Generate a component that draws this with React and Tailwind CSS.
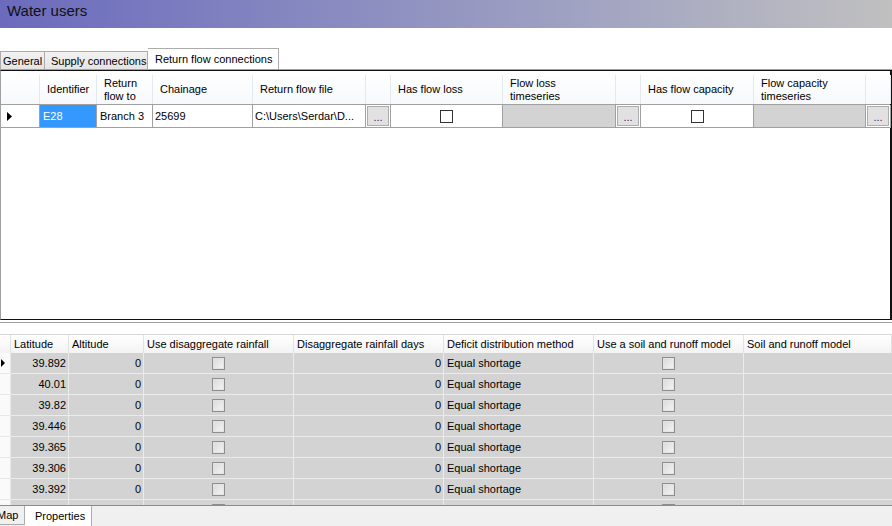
import React from 'react';

const upperCols = 'grid-cols-[39px_57px_56px_100px_113px_25px_112px_113px_25px_113px_112px_25px]';
const lowerCols = 'grid-cols-[11px_58px_75px_150px_150px_150px_150px_148px]';

const latitudes = ['39.892', '40.01', '39.82', '39.446', '39.365', '39.306', '39.392'];

function Check({ disabled }) {
  if (disabled) {
    return (
      <span className="block w-[13px] h-[13px] border border-[#8e8e8e] bg-[#e3e3e3] p-[1px]">
        <span className="block w-full h-full bg-gradient-to-br from-[#dcdcdc] to-[#f2f2f2]" />
      </span>
    );
  }
  return <span className="block w-[13px] h-[13px] border border-[#333333] bg-white" />;
}

function DotsButton() {
  return (
    <div className="h-full p-[1px] border-r border-b border-[#a0a0a0]">
      <div className="h-full border border-[#adadad] bg-[#e1e1e1] flex items-end justify-center pb-[2px] text-[#3a1d6e] leading-none">
        ...
      </div>
    </div>
  );
}

function Arrow() {
  return (
    <svg width="5" height="9" viewBox="0 0 5 9">
      <path d="M0 0 L5 4.5 L0 9 Z" fill="#000" />
    </svg>
  );
}

function HeaderCell({ children }) {
  return (
    <div className="h-full border-r border-[#e3e9f1] flex items-center leading-[13px] pl-[7px]">
      <span>{children}</span>
    </div>
  );
}

export default function App() {
  return (
    <div className="w-[892px] h-[526px] overflow-hidden bg-white flex flex-col font-['Liberation_Sans',Arial,sans-serif] text-[11px] text-black">
      {/* title */}
      <div className="h-[28px] shrink-0 flex items-center pl-[7px] pb-[5px] bg-gradient-to-r from-[#6b6abd] to-[#c0c0c0]">
        <span className="text-[15px] text-[#101010]">Water users</span>
      </div>

      <div className="h-[20px] shrink-0" />

      {/* tab strip */}
      <div className="h-[22px] shrink-0 flex items-end border-b border-[#a0a0a0]">
        <div className="h-[18px] w-[45px] border border-b-0 border-[#acacac] bg-gradient-to-b from-[#f2f2f2] to-[#e4e4e4] flex items-center pl-[2px] pt-[1px]">
          General
        </div>
        <div className="h-[18px] w-[103px] border border-b-0 border-l-0 border-[#acacac] bg-gradient-to-b from-[#f2f2f2] to-[#e4e4e4] flex items-center pl-[6px] pt-[1px]">
          Supply connections
        </div>
        <div className="h-[21px] w-[131px] border border-b-0 border-l-0 border-[#acacac] bg-white flex items-start pt-[2px] pl-[7px]">
          Return flow connections
        </div>
      </div>

      {/* upper grid */}
      <div className="h-[250px] shrink-0 border-t border-b border-r-2 border-[#111] border-l border-l-[#a0a0a0] bg-white">
        <div className={`grid ${upperCols} h-[34px] pt-[4px] border-b border-[#a0a0a0] bg-gradient-to-b from-white to-[#f7f9fc]`}>
          <HeaderCell />
          <HeaderCell>Identifier</HeaderCell>
          <HeaderCell>
            <span className="block">Return</span>
            <span className="block">flow to</span>
          </HeaderCell>
          <HeaderCell>Chainage</HeaderCell>
          <HeaderCell>Return flow file</HeaderCell>
          <HeaderCell />
          <HeaderCell>Has flow loss</HeaderCell>
          <HeaderCell>
            <span className="block">Flow loss</span>
            <span className="block">timeseries</span>
          </HeaderCell>
          <HeaderCell />
          <HeaderCell>Has flow capacity</HeaderCell>
          <HeaderCell>
            <span className="block">Flow capacity</span>
            <span className="block">timeseries</span>
          </HeaderCell>
          <HeaderCell />
        </div>
        <div className={`grid ${upperCols} h-[23px]`}>
          <div className="border-r border-b border-[#a0a0a0] flex items-center pl-[6px]">
            <Arrow />
          </div>
          <div className="border-r border-b border-[#a0a0a0] bg-[#3399ff] text-white flex items-center pl-[3px]">E28</div>
          <div className="border-r border-b border-[#a0a0a0] flex items-center pl-[3px]">Branch 3</div>
          <div className="border-r border-b border-[#a0a0a0] flex items-center pl-[2px]">25699</div>
          <div className="border-r border-b border-[#a0a0a0] flex items-center pl-[2px] whitespace-nowrap overflow-hidden">
            C:\Users\Serdar\D...
          </div>
          <DotsButton />
          <div className="border-r border-b border-[#a0a0a0] flex items-center justify-center">
            <Check />
          </div>
          <div className="border-r border-b border-[#a0a0a0] bg-[#d3d3d3]" />
          <DotsButton />
          <div className="border-r border-b border-[#a0a0a0] flex items-center justify-center">
            <Check />
          </div>
          <div className="border-r border-b border-[#a0a0a0] bg-[#d3d3d3]" />
          <DotsButton />
        </div>
      </div>

      <div className="h-[2px] shrink-0" />

      {/* lower grid */}
      <div className="h-[183px] shrink-0 border-t border-[#a0a0a0] overflow-hidden bg-white">
        <div className="h-[11px]" />
        <div className={`grid ${lowerCols} h-[19px] border-t border-[#d8d8d8] bg-gradient-to-b from-white to-[#f3f3f3]`}>
          {['', 'Latitude', 'Altitude', 'Use disaggregate rainfall', 'Disaggregate rainfall days', 'Deficit distribution method', 'Use a soil and runoff model', 'Soil and runoff model'].map((h, i) => (
            <div key={i} className="border-r border-[#e2e2e2] flex items-center pl-[3px] whitespace-nowrap overflow-hidden">
              {h}
            </div>
          ))}
        </div>
        {latitudes.map((lat, r) => (
          <div key={r} className={`grid ${lowerCols} h-[21px]`}>
            <div className="border-r border-b border-[#e8e8e8] bg-[#fafafa] flex items-center pl-[1px]">
              {r === 0 && (
                <svg width="4" height="8" viewBox="0 0 4 8">
                  <path d="M0 0 L4 4 L0 8 Z" fill="#000" />
                </svg>
              )}
            </div>
            <div className="border-r border-b border-[#ebebeb] bg-[#d3d3d3] flex items-center justify-end pr-[2px]">{lat}</div>
            <div className="border-r border-b border-[#ebebeb] bg-[#d3d3d3] flex items-center justify-end pr-[2px]">0</div>
            <div className="border-r border-b border-[#ebebeb] bg-[#d3d3d3] flex items-center justify-center">
              <Check disabled />
            </div>
            <div className="border-r border-b border-[#ebebeb] bg-[#d3d3d3] flex items-center justify-end pr-[2px]">0</div>
            <div className="border-r border-b border-[#ebebeb] bg-[#d3d3d3] flex items-center pl-[3px]">Equal shortage</div>
            <div className="border-r border-b border-[#ebebeb] bg-[#d3d3d3] flex items-center justify-center">
              <Check disabled />
            </div>
            <div className="border-b border-[#ebebeb] bg-[#d3d3d3]" />
          </div>
        ))}
        {/* partially visible next row */}
        <div className={`grid ${lowerCols} h-[21px]`}>
          <div className="border-r border-[#e8e8e8] bg-[#fafafa]" />
          <div className="border-r border-[#ebebeb] bg-[#d3d3d3]" />
          <div className="border-r border-[#ebebeb] bg-[#d3d3d3]" />
          <div className="border-r border-[#ebebeb] bg-[#d3d3d3] flex justify-center pt-[4px]">
            <Check disabled />
          </div>
          <div className="border-r border-[#ebebeb] bg-[#d3d3d3]" />
          <div className="border-r border-[#ebebeb] bg-[#d3d3d3]" />
          <div className="border-r border-[#ebebeb] bg-[#d3d3d3] flex justify-center pt-[4px]">
            <Check disabled />
          </div>
          <div className="bg-[#d3d3d3]" />
        </div>
      </div>

      {/* bottom tabs */}
      <div className="h-[21px] shrink-0 border-t border-[#8c8c8c] bg-[#f0f0f0] flex">
        <div className="w-[25px] h-[19px] border-r border-b border-[#acacac] overflow-hidden flex items-center">
          <span className="-ml-[3px]">Map</span>
        </div>
        <div className="w-[67px] h-full bg-white border-r border-[#acacac] flex items-center pl-[10px]">Properties</div>
      </div>
    </div>
  );
}
